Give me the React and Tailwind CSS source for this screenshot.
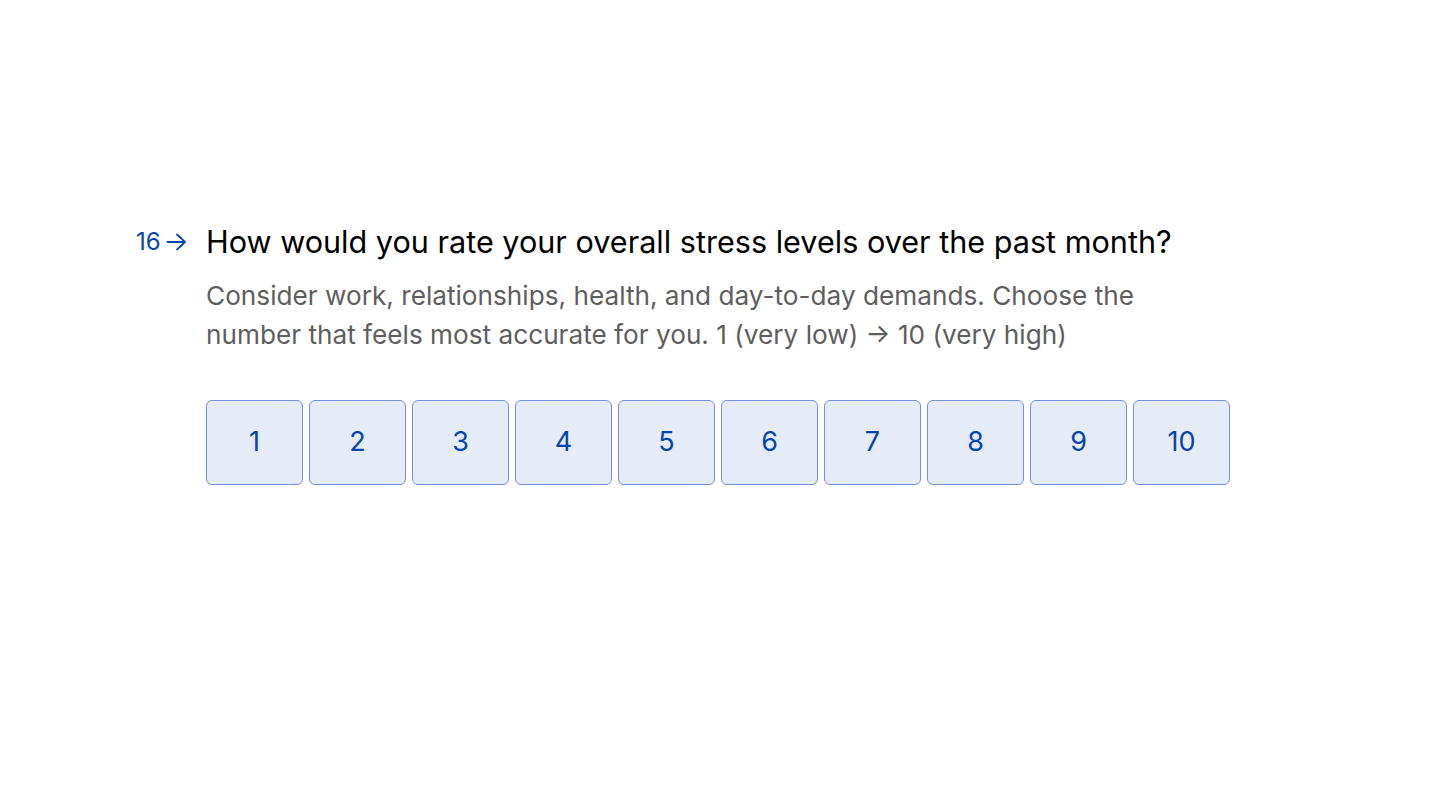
import React, { useState } from 'react';

const App = () => {
  const [selected, setSelected] = useState(null);
  const options = [1, 2, 3, 4, 5, 6, 7, 8, 9, 10];

  return (
    <div className="min-h-screen w-full bg-white font-['Inter','Liberation_Sans',sans-serif]">
      <div className="pt-[222px] pl-[206px]">
        <div className="w-[1024px]">
          {/* Question */}
          <div className="relative">
            <div className="absolute -left-[70px] top-[6px] flex items-center gap-[5px] text-[#0445AF]">
              <span className="text-[24px] leading-[28px]">16</span>
              <svg width="21" height="20" viewBox="0 0 21 20" fill="none" stroke="currentColor" strokeWidth="1.8" strokeLinecap="round" strokeLinejoin="round">
                <path d="M1.5 10h17.5M11 2.5l8 7.5-8 7.5" />
              </svg>
            </div>
            <h1 className="text-[30.6px] leading-[40px] text-black">
              How would you rate your overall stress levels over the past month?
            </h1>
          </div>

          {/* Description */}
          <p className="mt-[14px] w-[975px] text-[26.2px] leading-[39px] text-[#5E5E5E]">
            Consider work, relationships, health, and day-to-day demands. Choose the number that feels most accurate for you. 1 (very low) → 10 (very high)
          </p>

          {/* Scale */}
          <div className="mt-[46px] grid grid-cols-10 gap-[6px]">
            {options.map((n) => (
              <button
                key={n}
                onClick={() => setSelected(n)}
                className={`h-[85px] rounded-[6px] border text-[27px] text-[#0445AF] ${
                  selected === n
                    ? 'bg-[#0445AF] text-white border-[#0445AF]'
                    : 'bg-[#E6EBF8] border-[#7390D8]'
                }`}
              >
                {n}
              </button>
            ))}
          </div>
        </div>
      </div>
    </div>
  );
};

export default App;
